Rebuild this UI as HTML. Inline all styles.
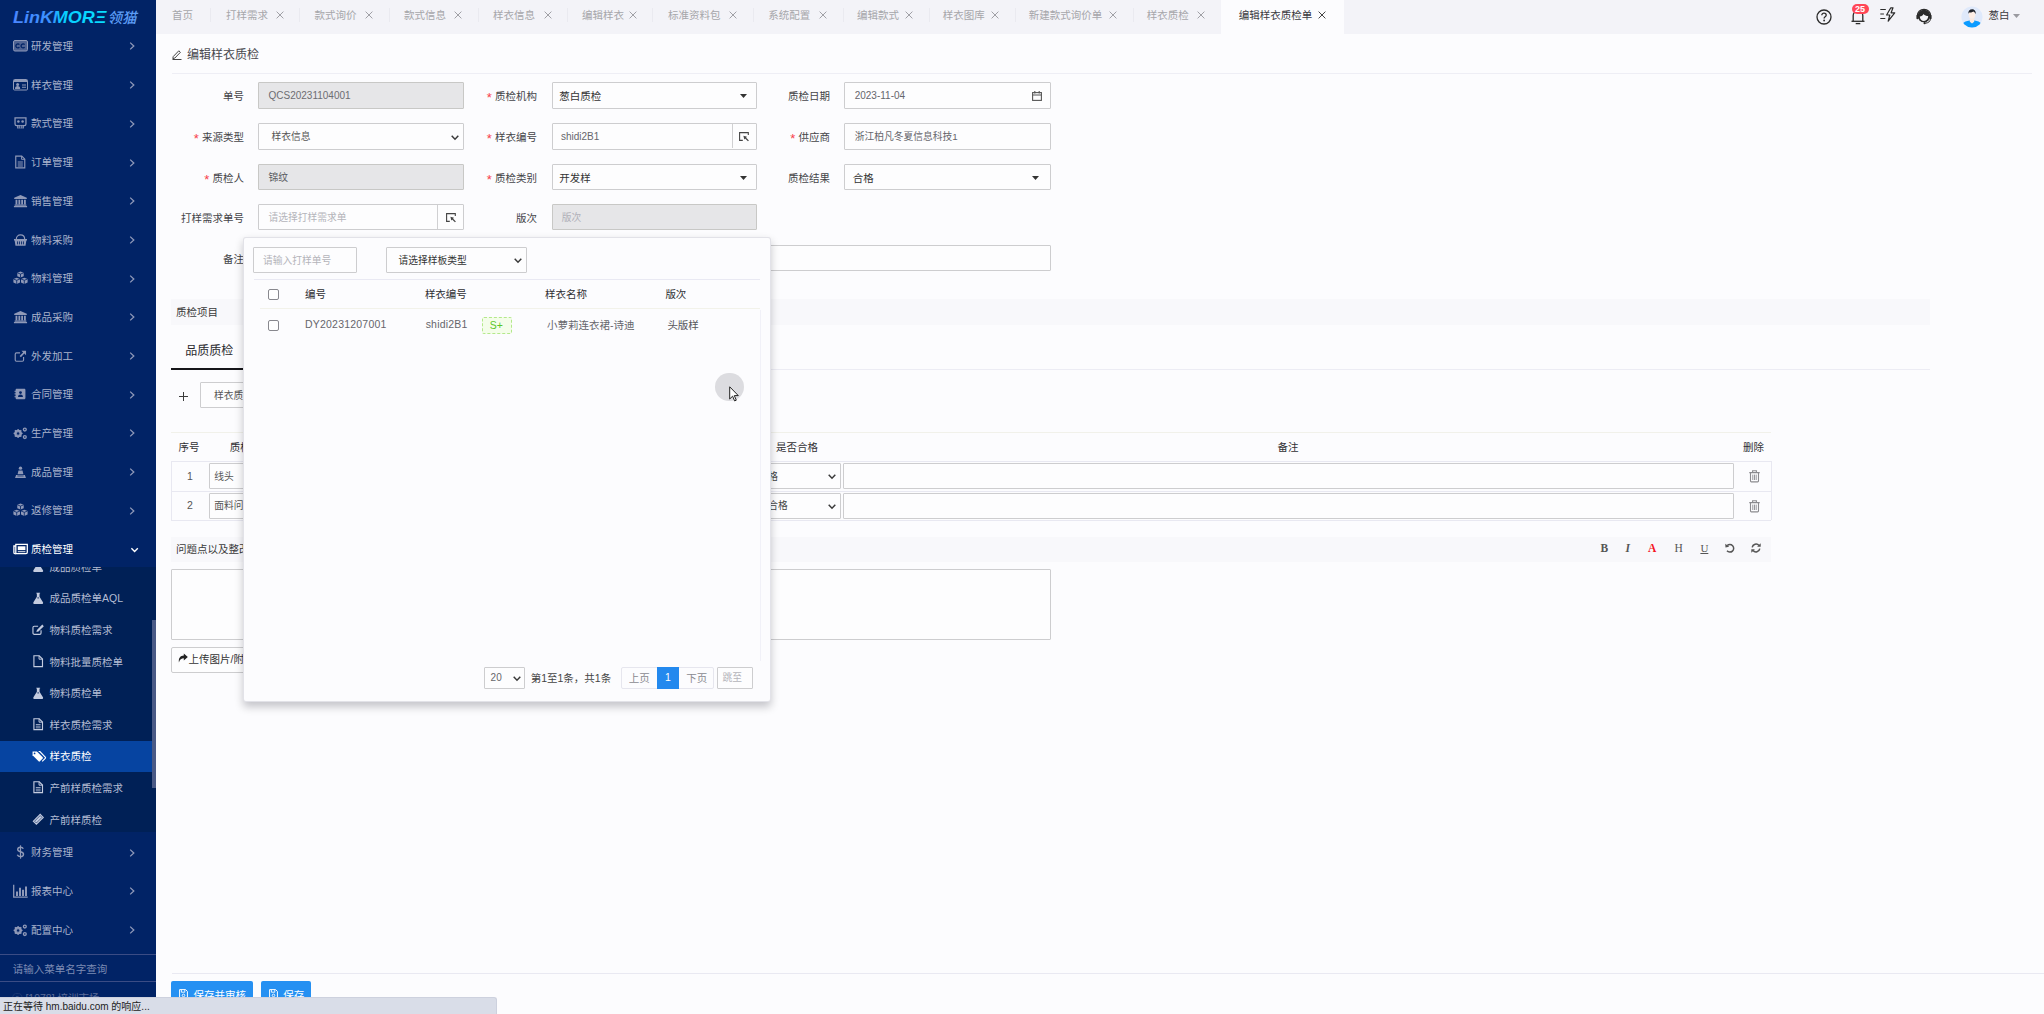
<!DOCTYPE html>
<html lang="zh-CN">
<head>
<meta charset="utf-8">
<title>编辑样衣质检单</title>
<style>
*{box-sizing:border-box;margin:0;padding:0}
html,body{width:2044px;height:1014px;overflow:hidden}
body{position:relative;background:#fcfcfe;font-family:"Liberation Sans","Noto Sans CJK SC",sans-serif;font-size:10.5px;color:#333}
.a{position:absolute}
.t{position:absolute;white-space:nowrap;line-height:14px;font-size:10.5px}
svg{position:absolute;overflow:visible}
/* sidebar */
#side{position:absolute;left:0;top:0;width:156px;height:1014px;background:#012366;overflow:hidden}
#side .m{position:absolute;left:0;width:156px;height:38.7px}
#side .m .t{left:31px;top:12.4px;color:#aab3cc}
#side .m svg.i{left:13px;top:12.4px;width:15px;height:14px}
#side .m svg.c{left:128px;top:14.9px;width:8px;height:10px}
#side .s{position:absolute;left:0;width:152px;height:31.6px}
#side .s .t{left:49.5px;top:8.8px;color:#b4bcd3}
#side .s svg.i{left:31.5px;top:9px;width:12.4px;height:12.4px}
/* tabs */
#tabs{position:absolute;left:156px;top:0;width:1888px;height:33.5px;background:#f3f3f8}
#tabs .t{top:7.7px;color:#a6a6aa}
#tabs svg.x{top:10.5px;width:8px;height:8px}
/* form */
.lab{position:absolute;white-space:nowrap;line-height:14px;font-size:10.5px;color:#444448;text-align:right}
.lab i{font-style:normal;color:#f8404a;margin-right:3.2px;font-size:13px;position:relative;top:2.2px;line-height:10px}
.inp{position:absolute;height:26px;border:1px solid #cdcdcf;background:#fdfdfe;border-radius:1px}
.inp.dis{background:#e6e6e8;border-color:#c8c8c6}
.inp .t{top:5.7px}
</style>
</head>
<body>
<div id="side">
<svg style="left:13px;top:9px;width:128px;height:17px" viewBox="0 0 128 17"><defs><linearGradient id="lg" gradientUnits="userSpaceOnUse" x1="0" x2="95" y1="0" y2="0"><stop offset="0" stop-color="#4b86ff"/><stop offset=".42" stop-color="#3a92ff"/><stop offset=".5" stop-color="#08ccff"/><stop offset="1" stop-color="#08e0ff"/></linearGradient></defs><text x="0" y="14.300" font-family="Liberation Sans,sans-serif" font-weight="bold" font-style="italic" font-size="17" textLength="93.500" lengthAdjust="spacingAndGlyphs" fill="url(#lg)">LinKMORΞ</text><text x="94.500" y="13.800" font-family="Noto Sans CJK SC,sans-serif" font-weight="500" font-style="italic" font-size="14.500" textLength="29" lengthAdjust="spacingAndGlyphs" fill="#5c9cf5">领猫</text></svg>
<div class="m" style="top:26.6px;color:#8f99b8"><svg class="i" viewBox="0 0 15 14"><rect x="0.5" y="1.5" width="14" height="10.5" rx="1.5" fill="currentColor" opacity=".55"/><rect x="0.5" y="1.5" width="14" height="10.5" rx="1.5" fill="none" stroke="currentColor"/><path d="M6.4 5.6a2 2 0 1 0 0 2.6M11.6 5.6a2 2 0 1 0 0 2.6" fill="none" stroke="#012366" stroke-width="1.3"/></svg><span class="t" style="color:#aab3cc">研发管理</span><svg class="c" viewBox="0 0 8 10"><path d="M2.200 1.600L5.800 5 2.200 8.400" fill="none" stroke="currentColor" stroke-width="1.300"/></svg></div>
<div class="m" style="top:65.3px;color:#8f99b8"><svg class="i" viewBox="0 0 15 14"><rect x="0.5" y="1.5" width="14" height="10.5" rx="1" fill="none" stroke="currentColor"/><rect x="1" y="2" width="13" height="2" fill="currentColor"/><circle cx="4.6" cy="6.6" r="1.5" fill="currentColor"/><path d="M2 11c0-2.2 1-3 2.6-3s2.6.8 2.6 3zM9 6.5h4v1H9zM9 8.7h4v1H9z" fill="currentColor"/></svg><span class="t" style="color:#aab3cc">样衣管理</span><svg class="c" viewBox="0 0 8 10"><path d="M2.200 1.600L5.800 5 2.200 8.400" fill="none" stroke="currentColor" stroke-width="1.300"/></svg></div>
<div class="m" style="top:104.1px;color:#8f99b8"><svg class="i" viewBox="0 0 15 14"><g transform="translate(1.20,1.12) scale(0.84)"><path d="M1 .8h13v7.400c0 1.100-.9 2-2 2H3c-1.100 0-2-.9-2-2z" fill="none" stroke="currentColor" stroke-width="1.500"/><circle cx="5" cy="5.200" r="1.500" fill="currentColor"/><circle cx="10" cy="5.200" r="1.500" fill="currentColor"/><path d="M3.500 10h8v3.500h-8z" fill="currentColor"/><path d="M5.500 10.300v3.200M7.500 10.300v3.200M9.500 10.300v3.200" stroke="#012366" stroke-width=".8"/></g></svg><span class="t" style="color:#aab3cc">款式管理</span><svg class="c" viewBox="0 0 8 10"><path d="M2.200 1.600L5.800 5 2.200 8.400" fill="none" stroke="currentColor" stroke-width="1.300"/></svg></div>
<div class="m" style="top:142.8px;color:#8f99b8"><svg class="i" viewBox="0 0 15 14"><g transform="translate(0.38,0.35) scale(0.95)"><path d="M2.5 .8h6.3l3.2 3.2v9.2H2.5z" fill="none" stroke="currentColor" stroke-width="1.2"/><path d="M8.6 .8v3.4h3.4" fill="none" stroke="currentColor"/><path d="M4.6 6.6h5.4v1H4.6zM4.6 8.7h5.4v1H4.6zM4.6 10.7h5.4v1H4.6z" fill="currentColor"/></g></svg><span class="t" style="color:#aab3cc">订单管理</span><svg class="c" viewBox="0 0 8 10"><path d="M2.200 1.600L5.800 5 2.200 8.400" fill="none" stroke="currentColor" stroke-width="1.300"/></svg></div>
<div class="m" style="top:181.5px;color:#8f99b8"><svg class="i" viewBox="0 0 15 14"><g transform="translate(0.75,0.70) scale(0.9)"><path d="M7.5 .3l7 3.2v1.3h-14V3.500zM2 5.600h2v5H2zM5.200 5.600h2v5h-2zM8.300 5.600h2v5h-2zM11.400 5.600h2v5h-2zM1 11h13v1.200H1zM.2 12.600h14.600V14H.2z" fill="currentColor"/></g></svg><span class="t" style="color:#aab3cc">销售管理</span><svg class="c" viewBox="0 0 8 10"><path d="M2.200 1.600L5.800 5 2.200 8.400" fill="none" stroke="currentColor" stroke-width="1.300"/></svg></div>
<div class="m" style="top:220.2px;color:#8f99b8"><svg class="i" viewBox="0 0 15 14"><g transform="translate(0.52,0.49) scale(0.93)"><path d="M.5 6h14v1.600h-.700l-.900 5.600H2.100L1.200 7.600H.5z" fill="currentColor"/><path d="M3 6.200C3 3.400 5 1.500 7.500 1.500S12 3.400 12 6.200" stroke="currentColor" stroke-width="1.300" fill="none"/><path d="M4.300 8.500v3.200M6.400 8.500v3.200M8.600 8.500v3.200M10.700 8.500v3.200" stroke="#012366" stroke-width=".9"/></g></svg><span class="t" style="color:#aab3cc">物料采购</span><svg class="c" viewBox="0 0 8 10"><path d="M2.200 1.600L5.800 5 2.200 8.400" fill="none" stroke="currentColor" stroke-width="1.300"/></svg></div>
<div class="m" style="top:258.9px;color:#8f99b8"><svg class="i" viewBox="0 0 15 14"><path d="M7.500 .5l3.200 1.300v3.400L7.500 6.600 4.300 5.200V1.800zM3.700 6.700l3.300 1.300v3.600l-3.300 1.500L.4 11.600V8zM11.300 6.700l3.300 1.300v3.600l-3.300 1.500L8 11.600V8z" fill="currentColor"/><path d="M4.300 1.800l3.200 1.300 3.200-1.300M7.500 3.100v3.400M.4 8l3.300 1.300L7 8M3.700 9.300v3.700M8 8l3.300 1.300L14.600 8M11.300 9.300v3.700" stroke="#012366" stroke-width=".8" fill="none"/></svg><span class="t" style="color:#aab3cc">物料管理</span><svg class="c" viewBox="0 0 8 10"><path d="M2.200 1.600L5.800 5 2.200 8.400" fill="none" stroke="currentColor" stroke-width="1.300"/></svg></div>
<div class="m" style="top:297.6px;color:#8f99b8"><svg class="i" viewBox="0 0 15 14"><g transform="translate(0.75,0.70) scale(0.9)"><path d="M7.5 .3l7 3.2v1.3h-14V3.500zM2 5.600h2v5H2zM5.200 5.600h2v5h-2zM8.300 5.600h2v5h-2zM11.400 5.600h2v5h-2zM1 11h13v1.200H1zM.2 12.600h14.600V14H.2z" fill="currentColor"/></g></svg><span class="t" style="color:#aab3cc">成品采购</span><svg class="c" viewBox="0 0 8 10"><path d="M2.200 1.600L5.800 5 2.200 8.400" fill="none" stroke="currentColor" stroke-width="1.300"/></svg></div>
<div class="m" style="top:336.2px;color:#8f99b8"><svg class="i" viewBox="0 0 15 14"><g transform="translate(0.90,0.84) scale(0.88)"><path d="M11 8v3.600c0 .8-.600 1.400-1.400 1.400H2.900c-.800 0-1.400-.600-1.400-1.400V4.900c0-.800.600-1.400 1.400-1.400H7" fill="none" stroke="currentColor" stroke-width="1.300"/><path d="M8.600 1h5.200v5.200l-1.900-1.900-4 4-1.400-1.400 4-4z" fill="currentColor"/></g></svg><span class="t" style="color:#aab3cc">外发加工</span><svg class="c" viewBox="0 0 8 10"><path d="M2.200 1.600L5.800 5 2.200 8.400" fill="none" stroke="currentColor" stroke-width="1.300"/></svg></div>
<div class="m" style="top:374.9px;color:#8f99b8"><svg class="i" viewBox="0 0 15 14"><g transform="translate(1.35,1.26) scale(0.82)"><path d="M3 .5h9c.800 0 1.500.700 1.500 1.500v10c0 .800-.700 1.500-1.500 1.500H3c-.800 0-1.500-.700-1.500-1.500V2C1.500 1.200 2.200.5 3 .5z" fill="currentColor"/><circle cx="7.500" cy="5.200" r="1.700" fill="#012366"/><path d="M4.500 10.600c0-2 1.200-3 3-3s3 1 3 3z" fill="#012366"/><path d="M.3 3h1.500v1.500H.3zM.3 6.200h1.500v1.500H.3zM.3 9.400h1.500v1.500H.3z" fill="currentColor"/></g></svg><span class="t" style="color:#aab3cc">合同管理</span><svg class="c" viewBox="0 0 8 10"><path d="M2.200 1.600L5.800 5 2.200 8.400" fill="none" stroke="currentColor" stroke-width="1.300"/></svg></div>
<div class="m" style="top:413.6px;color:#8f99b8"><svg class="i" viewBox="0 0 15 14"><g transform="translate(0.30,0.28) scale(0.96)"><circle cx="5" cy="7.500" r="3" fill="none" stroke="currentColor" stroke-width="2"/><path d="M5 2.800v9.400M.3 7.500h9.400M1.700 4.200l6.600 6.600M8.300 4.200l-6.600 6.600" stroke="currentColor" stroke-width="1.300"/><circle cx="5" cy="7.500" r="1.300" fill="#012366"/><circle cx="12" cy="3.400" r="1.500" fill="none" stroke="currentColor" stroke-width="1.400"/><circle cx="12" cy="11.200" r="1.500" fill="none" stroke="currentColor" stroke-width="1.400"/></g></svg><span class="t" style="color:#aab3cc">生产管理</span><svg class="c" viewBox="0 0 8 10"><path d="M2.200 1.600L5.800 5 2.200 8.400" fill="none" stroke="currentColor" stroke-width="1.300"/></svg></div>
<div class="m" style="top:452.4px;color:#8f99b8"><svg class="i" viewBox="0 0 15 14"><g transform="translate(0.90,0.84) scale(0.88)"><circle cx="7.500" cy="2.600" r="1.900" fill="currentColor"/><path d="M5.200 5.200h4.600l1 4.300H4.200zM2.500 10.400h10l1.200 3.300H1.300z" fill="currentColor"/><path d="M4 11.500h7" stroke="#012366" stroke-width=".8"/></g></svg><span class="t" style="color:#aab3cc">成品管理</span><svg class="c" viewBox="0 0 8 10"><path d="M2.200 1.600L5.800 5 2.200 8.400" fill="none" stroke="currentColor" stroke-width="1.300"/></svg></div>
<div class="m" style="top:491.1px;color:#8f99b8"><svg class="i" viewBox="0 0 15 14"><path d="M7.500 .5l3.200 1.300v3.400L7.500 6.600 4.300 5.200V1.800zM3.700 6.700l3.300 1.300v3.600l-3.300 1.500L.4 11.600V8zM11.300 6.700l3.300 1.300v3.600l-3.300 1.500L8 11.600V8z" fill="currentColor"/><path d="M4.300 1.800l3.200 1.300 3.200-1.300M7.500 3.100v3.400M.4 8l3.300 1.300L7 8M3.700 9.300v3.700M8 8l3.300 1.300L14.600 8M11.300 9.300v3.700" stroke="#012366" stroke-width=".8" fill="none"/></svg><span class="t" style="color:#aab3cc">返修管理</span><svg class="c" viewBox="0 0 8 10"><path d="M2.200 1.600L5.800 5 2.200 8.400" fill="none" stroke="currentColor" stroke-width="1.300"/></svg></div>
<div class="m" style="top:529.8px;color:#ffffff"><svg class="i" viewBox="0 0 15 14"><path d="M2.800 2.300h11.500v8c0 .700-.600 1.300-1.300 1.300H2.800z" fill="none" stroke="currentColor" stroke-width="1.300"/><path d="M2.800 4H.900v6.400c0 .700.500 1.200 1.200 1.200h.700" fill="none" stroke="currentColor" stroke-width="1.300"/><rect x="4.800" y="4.300" width="7.600" height="3.800" fill="currentColor"/><path d="M4.800 9.700h7.600" stroke="currentColor" stroke-width=".9"/></svg><span class="t" style="color:#ffffff">质检管理</span><svg class="c" viewBox="0 0 8 10" style="left:129px;width:10px"><path d="M1.400 3.200L4.600 6.400 7.800 3.200" fill="none" stroke="currentColor" stroke-width="1.400"/></svg></div>
<div class="a" style="left:0;top:567px;width:156px;height:265px;background:#002056;overflow:hidden">
<div class="s" style="top:-15.9px;color:#c3cbdf"><svg class="i" viewBox="0 0 13 13"><path d="M4.500 .8h4v.900h-.600v3.400l3.600 5.700c.500.900-.100 1.900-1.100 1.900H2.600c-1 0-1.600-1-1.100-1.900l3.600-5.700V1.700h-.600z" fill="currentColor"/><path d="M5.600 6.200h1.800" stroke="#002056" stroke-width=".9"/></svg><span class="t">成品质检单</span></div>
<div class="s" style="top:15.7px;color:#c3cbdf"><svg class="i" viewBox="0 0 13 13"><path d="M4.500 .8h4v.900h-.600v3.400l3.600 5.700c.500.900-.100 1.900-1.100 1.900H2.600c-1 0-1.600-1-1.100-1.900l3.600-5.700V1.700h-.600z" fill="currentColor"/><path d="M5.600 6.200h1.800" stroke="#002056" stroke-width=".9"/></svg><span class="t">成品质检单AQL</span></div>
<div class="s" style="top:47.3px;color:#c3cbdf"><svg class="i" viewBox="0 0 13 13"><path d="M9.500 7.500v3c0 .800-.600 1.400-1.400 1.400H2.400C1.600 11.900 1 11.300 1 10.500V4.800c0-.800.600-1.400 1.400-1.400h4" fill="none" stroke="currentColor" stroke-width="1.200"/><path d="M5.200 7.300L10.800 1.700l1.600 1.600L6.800 8.900l-2.200.600z" fill="currentColor"/></svg><span class="t">物料质检需求</span></div>
<div class="s" style="top:78.9px;color:#c3cbdf"><svg class="i" viewBox="0 0 13 13"><path d="M2 .8h5.600l3.400 3.400v8H2z" fill="none" stroke="currentColor" stroke-width="1.200"/><path d="M7.400.8v3.600h3.600" fill="none" stroke="currentColor" stroke-width="1"/></svg><span class="t">物料批量质检单</span></div>
<div class="s" style="top:110.5px;color:#c3cbdf"><svg class="i" viewBox="0 0 13 13"><path d="M4.500 .8h4v.900h-.600v3.400l3.600 5.700c.500.900-.100 1.900-1.100 1.900H2.600c-1 0-1.600-1-1.100-1.900l3.600-5.700V1.700h-.600z" fill="currentColor"/><path d="M5.600 6.200h1.800" stroke="#002056" stroke-width=".9"/></svg><span class="t">物料质检单</span></div>
<div class="s" style="top:142.1px;color:#c3cbdf"><svg class="i" viewBox="0 0 13 13"><path d="M2 .8h5.600l3.400 3.400v8H2z" fill="none" stroke="currentColor" stroke-width="1.200"/><path d="M7.400.8v3.600h3.600" fill="none" stroke="currentColor" stroke-width="1"/><path d="M4 6.300h5v.9H4zM4 8.100h5v.9H4zM4 9.900h5v.9H4z" fill="currentColor"/></svg><span class="t">样衣质检需求</span></div>
<div class="s" style="top:173.7px;background:#0644a1;color:#fff"><svg class="i" viewBox="0 0 13 13"><path d="M.6 1.600h4.600l6 6c.4.400.4 1 0 1.400l-2.900 2.900c-.400.400-1 .400-1.400 0l-6.300-6.300z" fill="currentColor"/><circle cx="2.700" cy="3.600" r=".9" fill="#0644a1"/><path d="M7 1.600h1.300l5.600 5.800c.4.400.4 1 0 1.400l-3.200 3.200" fill="none" stroke="currentColor" stroke-width="1.200"/></svg><span class="t" style="color:#fff">样衣质检</span></div>
<div class="s" style="top:205.3px;color:#c3cbdf"><svg class="i" viewBox="0 0 13 13"><path d="M2 .8h5.600l3.400 3.400v8H2z" fill="none" stroke="currentColor" stroke-width="1.200"/><path d="M7.400.8v3.600h3.600" fill="none" stroke="currentColor" stroke-width="1"/><path d="M4 6.300h5v.9H4zM4 8.100h5v.9H4zM4 9.900h5v.9H4z" fill="currentColor"/></svg><span class="t">产前样质检需求</span></div>
<div class="s" style="top:236.9px;color:#c3cbdf"><svg class="i" viewBox="0 0 13 13"><path d="M8.600 .6l4 4-8 8-4-4z" fill="currentColor"/><path d="M8.600 2.700l1.900 1.900-5.900 5.900-1.900-1.900z" fill="none" stroke="#002056" stroke-width=".6"/></svg><span class="t">产前样质检</span></div>
<div class="a" style="left:151.5px;top:53px;width:4.5px;height:168px;background:#4a5a86"></div>
</div>
<div class="m" style="top:832.9px;color:#8f99b8"><svg class="i" viewBox="0 0 15 14"><path d="M10.300 3.800C9.800 2.800 8.800 2.300 7.500 2.300c-1.700 0-2.800.900-2.800 2.200 0 3 5.800 1.500 5.800 4.700 0 1.400-1.200 2.400-3 2.400-1.500 0-2.700-.700-3.200-1.900" fill="none" stroke="currentColor" stroke-width="1.400"/><path d="M7.500 .3v13.400" stroke="currentColor" stroke-width="1.200"/></svg><span class="t">财务管理</span><svg class="c" viewBox="0 0 8 10"><path d="M2.200 1.600L5.800 5 2.200 8.400" fill="none" stroke="currentColor" stroke-width="1.300"/></svg></div>
<div class="m" style="top:871.6px;color:#8f99b8"><svg class="i" viewBox="0 0 15 14"><path d="M.700 .800v12.400h14" fill="none" stroke="currentColor" stroke-width="1.300"/><path d="M3 7.500h2v4.600H3zM6 3.800h2v8.300H6zM9 5.800h2v6.300H9zM12 2.500h2v9.600h-2z" fill="currentColor"/></svg><span class="t">报表中心</span><svg class="c" viewBox="0 0 8 10"><path d="M2.200 1.600L5.800 5 2.200 8.400" fill="none" stroke="currentColor" stroke-width="1.300"/></svg></div>
<div class="m" style="top:910.2px;color:#8f99b8"><svg class="i" viewBox="0 0 15 14"><g transform="translate(0.30,0.28) scale(0.96)"><circle cx="5" cy="7.500" r="3" fill="none" stroke="currentColor" stroke-width="2"/><path d="M5 2.800v9.400M.3 7.500h9.400M1.700 4.200l6.600 6.600M8.300 4.200l-6.600 6.600" stroke="currentColor" stroke-width="1.300"/><circle cx="5" cy="7.500" r="1.300" fill="#012366"/><circle cx="12" cy="3.400" r="1.500" fill="none" stroke="currentColor" stroke-width="1.400"/><circle cx="12" cy="11.200" r="1.500" fill="none" stroke="currentColor" stroke-width="1.400"/></g></svg><span class="t">配置中心</span><svg class="c" viewBox="0 0 8 10"><path d="M2.200 1.600L5.800 5 2.200 8.400" fill="none" stroke="currentColor" stroke-width="1.300"/></svg></div>
<div class="a" style="left:0;top:953.5px;width:156px;height:1px;background:#3b4c85"></div>
<span class="t" style="left:12.700px;top:962.400px;color:#7d8cb4">请输入菜单名字查询</span>
<div class="a" style="left:0;top:981.3px;width:156px;height:1px;background:#3b4c85"></div>
<span class="t" style="left:12px;top:990.500px;color:#5d6c98">ⓒ [1978] 培训市场</span>
</div>
<div id="tabs">
<div class="a" style="left:1065px;top:0;width:123px;height:33.5px;background:#fcfcfe"></div>
<div class="a" style="left:53.7px;top:8px;width:1px;height:14px;background:#eaeaf0"></div>
<div class="a" style="left:143.4px;top:8px;width:1px;height:14px;background:#eaeaf0"></div>
<div class="a" style="left:232.5px;top:8px;width:1px;height:14px;background:#eaeaf0"></div>
<div class="a" style="left:321.5px;top:8px;width:1px;height:14px;background:#eaeaf0"></div>
<div class="a" style="left:411.0px;top:8px;width:1px;height:14px;background:#eaeaf0"></div>
<div class="a" style="left:496.0px;top:8px;width:1px;height:14px;background:#eaeaf0"></div>
<div class="a" style="left:596.5px;top:8px;width:1px;height:14px;background:#eaeaf0"></div>
<div class="a" style="left:686.5px;top:8px;width:1px;height:14px;background:#eaeaf0"></div>
<div class="a" style="left:772.5px;top:8px;width:1px;height:14px;background:#eaeaf0"></div>
<div class="a" style="left:858.5px;top:8px;width:1px;height:14px;background:#eaeaf0"></div>
<div class="a" style="left:976.5px;top:8px;width:1px;height:14px;background:#eaeaf0"></div>
<span class="t" style="left:16.0px">首页</span>
<span class="t" style="left:70.0px">打样需求</span>
<svg class="x" viewBox="0 0 8 8" style="left:120.2px"><path d="M.6.6l6.800 6.800M7.400.6L.6 7.400" stroke="#a0a0a6" stroke-width="1" fill="none"/></svg>
<span class="t" style="left:158.5px">款式询价</span>
<svg class="x" viewBox="0 0 8 8" style="left:209.0px"><path d="M.6.6l6.800 6.800M7.400.6L.6 7.400" stroke="#a0a0a6" stroke-width="1" fill="none"/></svg>
<span class="t" style="left:248.0px">款式信息</span>
<svg class="x" viewBox="0 0 8 8" style="left:298.0px"><path d="M.6.6l6.800 6.800M7.400.6L.6 7.400" stroke="#a0a0a6" stroke-width="1" fill="none"/></svg>
<span class="t" style="left:337.0px">样衣信息</span>
<svg class="x" viewBox="0 0 8 8" style="left:387.5px"><path d="M.6.6l6.800 6.800M7.400.6L.6 7.400" stroke="#a0a0a6" stroke-width="1" fill="none"/></svg>
<span class="t" style="left:426.0px">编辑样衣</span>
<svg class="x" viewBox="0 0 8 8" style="left:472.5px"><path d="M.6.6l6.800 6.800M7.400.6L.6 7.400" stroke="#a0a0a6" stroke-width="1" fill="none"/></svg>
<span class="t" style="left:512.0px">标准资料包</span>
<svg class="x" viewBox="0 0 8 8" style="left:573.0px"><path d="M.6.6l6.800 6.800M7.400.6L.6 7.400" stroke="#a0a0a6" stroke-width="1" fill="none"/></svg>
<span class="t" style="left:612.2px">系统配置</span>
<svg class="x" viewBox="0 0 8 8" style="left:663.0px"><path d="M.6.6l6.800 6.800M7.400.6L.6 7.400" stroke="#a0a0a6" stroke-width="1" fill="none"/></svg>
<span class="t" style="left:701.0px">编辑款式</span>
<svg class="x" viewBox="0 0 8 8" style="left:748.7px"><path d="M.6.6l6.800 6.800M7.400.6L.6 7.400" stroke="#a0a0a6" stroke-width="1" fill="none"/></svg>
<span class="t" style="left:786.8px">样衣图库</span>
<svg class="x" viewBox="0 0 8 8" style="left:834.7px"><path d="M.6.6l6.800 6.800M7.400.6L.6 7.400" stroke="#a0a0a6" stroke-width="1" fill="none"/></svg>
<span class="t" style="left:872.8px">新建款式询价单</span>
<svg class="x" viewBox="0 0 8 8" style="left:952.6px"><path d="M.6.6l6.800 6.800M7.400.6L.6 7.400" stroke="#a0a0a6" stroke-width="1" fill="none"/></svg>
<span class="t" style="left:990.8px">样衣质检</span>
<svg class="x" viewBox="0 0 8 8" style="left:1040.7px"><path d="M.6.6l6.800 6.800M7.400.6L.6 7.400" stroke="#a0a0a6" stroke-width="1" fill="none"/></svg>
<span class="t" style="left:1082.7px;color:#3a3a40">编辑样衣质检单</span>
<svg class="x" viewBox="0 0 8 8" style="left:1162.0px"><path d="M.6.6l6.800 6.800M7.400.6L.6 7.400" stroke="#444" stroke-width="1" fill="none"/></svg>
<svg style="left:1660px;top:8.700px;width:16px;height:16px" viewBox="0 0 16 16"><circle cx="8" cy="8" r="7" fill="none" stroke="#2b2b2b" stroke-width="1.300"/><path d="M5.800 6.300c0-1.300 1-2.100 2.200-2.100s2.200.800 2.200 2c0 1.500-2.100 1.600-2.100 3.200" fill="none" stroke="#2b2b2b" stroke-width="1.300"/><circle cx="8.100" cy="11.500" r=".9" fill="#2b2b2b"/></svg>
<svg style="left:1695px;top:10px;width:14px;height:15px" viewBox="0 0 14 15"><path d="M2.200 11V5.500C2.200 2.800 4.300 1 7 1s4.800 1.800 4.800 4.500V11" fill="none" stroke="#2b2b2b" stroke-width="1.300"/><path d="M.5 11.300h13" stroke="#2b2b2b" stroke-width="1.300"/><path d="M4.700 13.600h4.600" stroke="#2b2b2b" stroke-width="1.300"/></svg>
<div class="a" style="left:1696px;top:4px;width:16.500px;height:9.500px;border-radius:5px;background:#ff4757"></div>
<span class="t" style="left:1699px;top:1.800px;font-size:9px;color:#fff;font-weight:bold">25</span>
<svg style="left:1724px;top:7px;width:16px;height:15px" viewBox="0 0 16 15"><path d="M.3 2.500h5.500M.3 7h3.600M.3 11.500h5" stroke="#2b2b2b" stroke-width="1.200"/><path d="M10.800 .8L6.600 8h3.200l-1.600 6.200 6.500-8.400h-3.600l1.900-5z" fill="none" stroke="#2b2b2b" stroke-width="1.200" stroke-linejoin="round"/></svg>
<svg style="left:1760px;top:8px;width:16px;height:17px" viewBox="0 0 16 17"><circle cx="8" cy="8" r="6.300" fill="#2b2b2b"/><path d="M3.800 8.500c1.800-.3 3-1.200 3.800-2.600 1 1.300 2.700 2.100 4.600 2.200 0 2.900-1.800 4.900-4.200 4.900s-4.200-1.900-4.200-4.500z" fill="#f4f4f7"/><path d="M1.300 8c0-4 3-6.700 6.700-6.700S14.700 4 14.700 8" fill="none" stroke="#2b2b2b" stroke-width="1.300"/><rect x=".4" y="7" width="2.200" height="4.200" rx="1" fill="#2b2b2b"/><rect x="13.400" y="7" width="2.200" height="4.200" rx="1" fill="#2b2b2b"/><path d="M14.300 11c0 2.500-2 4-5 4.200" fill="none" stroke="#2b2b2b" stroke-width="1"/><circle cx="8.600" cy="15.200" r="1.100" fill="#2b2b2b"/></svg>
<svg style="left:1805px;top:5.500px;width:22px;height:22px" viewBox="0 0 22 22"><defs><clipPath id="av"><circle cx="11" cy="11" r="10.600"/></clipPath></defs><circle cx="11" cy="11" r="10.600" fill="#dfe9fb"/><g clip-path="url(#av)"><path d="M0 22c0-5 4-7.500 11-7.500S22 17 22 22z" fill="#0c9bff"/><path d="M8.800 12.500h4.400v3.200l-2.200 1.800-2.200-1.800z" fill="#fbe9e0"/><ellipse cx="11" cy="8.800" rx="3.300" ry="4" fill="#fdeee6"/><path d="M7.300 8.200C7 4.800 8.700 3.200 11 3.200s4.100 1.500 3.700 5c-.6-1.600-1.300-2.400-2.200-2.800-1.500.9-3.200 1.200-4.500 1.200-.3.500-.5 1-.7 1.600z" fill="#22262e"/></g></svg>
<span class="t" style="left:1832.600px;top:8.200px;color:#3a3a40">葱白</span>
<svg style="left:1856.500px;top:13.500px;width:7px;height:4px" viewBox="0 0 7 4"><path d="M0 0h7L3.500 4z" fill="#9a9aa0"/></svg>
</div>
<svg style="left:172px;top:48.500px;width:10px;height:11px" viewBox="0 0 10 11"><path d="M1.200 7.600L6.800 1.800l1.600 1.500-5.600 5.800-2 .5z" fill="none" stroke="#444" stroke-width="1"/><path d="M.5 10.500h9" stroke="#444" stroke-width="1"/></svg>
<span class="t" style="left:187.0px;top:48.0px;font-size:12px;color:#48484e;">编辑样衣质检</span>
<div class="a" style="left:172px;top:73px;width:1860px;height:1px;background:#eeeef5"></div>
<span class="lab" style="right:1800.0px;top:89.0px">单号</span>
<div class="inp dis" style="left:258px;top:82px;height:27px;width:206px"><span class="t" style="left:9.5px;top:5.9px;font-size:10px;color:#6d6d72;">QCS20231104001</span></div>
<span class="lab" style="right:1800.0px;top:129.8px"><i>*</i>来源类型</span>
<div class="inp" style="left:258px;top:123px;height:27px;width:206px"><span class="t" style="left:12.5px;top:5.7px;font-size:9.75px;color:#555;">样衣信息</span><svg style="left:192.0px;top:10.5px;width:8px;height:5.500px" viewBox="0 0 8 5.500"><path d="M.7.800L4 4.200 7.300.800" fill="none" stroke="#3a3a3a" stroke-width="1.500"/></svg></div>
<span class="lab" style="right:1800.0px;top:170.6px"><i>*</i>质检人</span>
<div class="inp dis" style="left:258px;top:164px;height:26px;width:206px"><span class="t" style="left:9.5px;top:5.7px;font-size:9.75px;color:#5a5a60;">锦纹</span></div>
<span class="lab" style="right:1800.0px;top:210.8px">打样需求单号</span>
<div class="inp" style="left:258px;top:204px;height:26px;width:206px"><span class="t" style="left:9.5px;top:5.7px;font-size:9.75px;color:#b4b4ba;">请选择打样需求单</span><div class="a" style="left:178.300px;top:0;width:1px;height:24.400px;background:#d0d0d2"></div><svg style="left:186.6px;top:8.0px;width:10px;height:9px" viewBox="0 0 10 9"><path d="M9.300 3V.6H.6v7.800h3.200" fill="none" stroke="#444" stroke-width="1.100"/><path d="M4.400 3.800l3.600.9-2.700 2.700z" fill="#444"/><path d="M5.800 5.300l3.600 3.600" stroke="#444" stroke-width="1.300"/></svg></div>
<span class="lab" style="right:1507.0px;top:89.0px"><i>*</i>质检机构</span>
<div class="inp" style="left:552.200px;top:82px;height:27px;width:204.500px"><span class="t" style="left:6.0px;top:5.7px;font-size:10.5px;color:#333;">葱白质检</span><svg style="left:186.7px;top:11.0px;width:7px;height:4px" viewBox="0 0 7 4"><path d="M0 0h7L3.500 4z" fill="#333"/></svg></div>
<span class="lab" style="right:1507.0px;top:129.8px"><i>*</i>样衣编号</span>
<div class="inp" style="left:552.200px;top:123px;height:27px;width:204.500px"><span class="t" style="left:7.8px;top:5.9px;font-size:10px;color:#66666c;">shidi2B1</span><div class="a" style="left:178.500px;top:0;width:1px;height:24.400px;background:#d0d0d2"></div><svg style="left:185.5px;top:8.0px;width:10px;height:9px" viewBox="0 0 10 9"><path d="M9.300 3V.6H.6v7.800h3.200" fill="none" stroke="#444" stroke-width="1.100"/><path d="M4.400 3.800l3.600.9-2.700 2.700z" fill="#444"/><path d="M5.800 5.300l3.600 3.600" stroke="#444" stroke-width="1.300"/></svg></div>
<span class="lab" style="right:1507.0px;top:170.6px"><i>*</i>质检类别</span>
<div class="inp" style="left:552.200px;top:164px;height:26px;width:204.500px"><span class="t" style="left:6.0px;top:5.7px;font-size:10.5px;color:#333;">开发样</span><svg style="left:186.7px;top:11.0px;width:7px;height:4px" viewBox="0 0 7 4"><path d="M0 0h7L3.500 4z" fill="#333"/></svg></div>
<span class="lab" style="right:1507.0px;top:210.8px">版次</span>
<div class="inp dis" style="left:552.200px;top:204px;height:26px;width:204.500px"><span class="t" style="left:8.5px;top:5.7px;font-size:9.75px;color:#b0b0b8;">版次</span></div>
<span class="lab" style="right:1214.0px;top:89.0px">质检日期</span>
<div class="inp" style="left:844.200px;top:82px;height:27px;width:206.600px"><span class="t" style="left:9.5px;top:5.9px;font-size:10px;color:#66666c;">2023-11-04</span><svg style="left:187px;top:7.500px;width:10px;height:10px" viewBox="0 0 10 10"><rect x=".6" y="1.600" width="8.800" height="7.800" fill="none" stroke="#555" stroke-width="1.100"/><path d="M.6 4h8.800M2.800 0v2.400M7.200 0v2.400" stroke="#555" stroke-width="1.100"/></svg></div>
<span class="lab" style="right:1214.0px;top:129.8px"><i>*</i>供应商</span>
<div class="inp" style="left:844.200px;top:123px;height:27px;width:206.600px"><span class="t" style="left:9.5px;top:5.7px;font-size:9.75px;color:#66666c;">浙江柏凡冬夏信息科技1</span></div>
<span class="lab" style="right:1214.0px;top:170.6px">质检结果</span>
<div class="inp" style="left:844.200px;top:164px;height:26px;width:206.600px"><span class="t" style="left:7.5px;top:5.7px;font-size:10.5px;color:#333;">合格</span><svg style="left:187.0px;top:11.0px;width:7px;height:4px" viewBox="0 0 7 4"><path d="M0 0h7L3.500 4z" fill="#333"/></svg></div>
<span class="lab" style="right:1800.0px;top:251.8px">备注</span>
<div class="inp" style="left:258px;top:244.800px;width:792.800px;height:26.400px"></div>
<div class="a" style="left:171px;top:299px;width:1758.500px;height:26.300px;background:#f8f8fb"></div>
<span class="t" style="left:176.0px;top:305.2px;font-size:10.5px;color:#3a3a3a;">质检项目</span>
<span class="t" style="left:185.2px;top:343.5px;font-size:12px;color:#2a2a2e;">品质质检</span>
<div class="a" style="left:171px;top:368.800px;width:1758.500px;height:1px;background:#ececf4"></div>
<div class="a" style="left:171px;top:367.500px;width:77px;height:2.400px;background:#16161a"></div>
<svg style="left:179.300px;top:392px;width:9px;height:9px" viewBox="0 0 9 9"><path d="M4.500 0v9M0 4.500h9" stroke="#3c3c3c" stroke-width="1"/></svg>
<div class="inp" style="left:200.400px;top:382.200px;width:150px"><span class="t" style="left:12.5px;top:5.7px;font-size:9.75px;color:#555;">样衣质检</span></div>
<div class="a" style="left:171px;top:432px;width:1600px;height:1px;background:#f1f1ea"></div>
<span class="t" style="left:178.5px;top:440.2px;font-size:10.5px;color:#303034;">序号</span>
<span class="t" style="left:229.7px;top:440.2px;font-size:10.5px;color:#303034;">质检项目</span>
<span class="t" style="left:776.0px;top:440.2px;font-size:10.5px;color:#303034;">是否合格</span>
<span class="t" style="left:1277.5px;top:440.2px;font-size:10.5px;color:#303034;">备注</span>
<span class="t" style="left:1743.0px;top:440.2px;font-size:10.5px;color:#303034;">删除</span>
<div class="a" style="left:171px;top:461px;width:1600px;height:1px;background:#e8e8f1"></div>
<div class="a" style="left:171px;top:490.5px;width:1600px;height:1px;background:#e8e8f1"></div>
<div class="a" style="left:171px;top:519.5px;width:1600px;height:1px;background:#e8e8f1"></div>
<div class="a" style="left:171px;top:461px;width:1px;height:59px;background:#e8e8f1"></div>
<div class="a" style="left:1771px;top:461px;width:1px;height:59px;background:#e8e8f1"></div>
<span class="t" style="left:187.0px;top:468.6px;font-size:10.5px;color:#555;">1</span>
<div class="inp" style="left:208.700px;top:463px;width:545px;height:26px"><span class="t" style="left:4.5px;top:5.5px;font-size:9.75px;color:#555;">线头</span></div>
<div class="inp" style="left:755px;top:463px;width:86px;height:26px"><span class="t" style="left:2.5px;top:5.5px;font-size:9.75px;color:#444;">合格</span><svg style="left:72.0px;top:10.0px;width:8px;height:5.500px" viewBox="0 0 8 5.500"><path d="M.7.800L4 4.200 7.300.800" fill="none" stroke="#3a3a3a" stroke-width="1.500"/></svg></div>
<div class="inp" style="left:843.300px;top:463px;width:891.200px;height:26px"></div>
<svg style="left:1748.500px;top:470.2px;width:11px;height:12.500px" viewBox="0 0 11 12.500"><path d="M.3 2.600h10.400M3.600 2.400V.8h3.800v1.600" fill="none" stroke="#8a8a8e" stroke-width="1.100"/><path d="M1.500 2.800v8.200c0 .5.400.9.900.9h6.200c.5 0 .9-.4.900-.9V2.800" fill="none" stroke="#8a8a8e" stroke-width="1.100"/><path d="M3.800 4.600v5.400M5.500 4.600v5.400M7.200 4.600v5.400" stroke="#8a8a8e" stroke-width=".9"/></svg>
<span class="t" style="left:187.0px;top:498.4px;font-size:10.5px;color:#555;">2</span>
<div class="inp" style="left:208.700px;top:492.8px;width:545px;height:26px"><span class="t" style="left:4.5px;top:5.5px;font-size:9.75px;color:#555;">面料问题</span></div>
<div class="inp" style="left:755px;top:492.8px;width:86px;height:26px"><span class="t" style="left:2.5px;top:5.5px;font-size:9.75px;color:#444;">不合格</span><svg style="left:72.0px;top:10.0px;width:8px;height:5.500px" viewBox="0 0 8 5.500"><path d="M.7.800L4 4.200 7.300.800" fill="none" stroke="#3a3a3a" stroke-width="1.500"/></svg></div>
<div class="inp" style="left:843.300px;top:492.8px;width:891.200px;height:26px"></div>
<svg style="left:1748.500px;top:499.5px;width:11px;height:12.500px" viewBox="0 0 11 12.500"><path d="M.3 2.600h10.400M3.600 2.400V.8h3.800v1.600" fill="none" stroke="#8a8a8e" stroke-width="1.100"/><path d="M1.500 2.800v8.200c0 .5.400.9.900.9h6.200c.5 0 .9-.4.900-.9V2.800" fill="none" stroke="#8a8a8e" stroke-width="1.100"/><path d="M3.800 4.600v5.400M5.500 4.600v5.400M7.200 4.600v5.400" stroke="#8a8a8e" stroke-width=".9"/></svg>
<div class="a" style="left:171px;top:536.500px;width:1600px;height:25.300px;background:#f8f8fb"></div>
<span class="t" style="left:176.0px;top:541.7px;font-size:10.5px;color:#3a3a3a;">问题点以及整改意见</span>
<span class="t" style="left:1600.5px;top:540.5px;font-size:11.5px;color:#555;font-family:'Liberation Serif',serif;font-weight:bold">B</span>
<span class="t" style="left:1625.5px;top:540.5px;font-size:11.5px;color:#555;font-family:'Liberation Serif',serif;font-style:italic;font-weight:bold">I</span>
<span class="t" style="left:1648.0px;top:540.5px;font-size:11.5px;color:#f5141e;font-family:'Liberation Serif',serif;font-weight:bold">A</span>
<span class="t" style="left:1674.4px;top:540.5px;font-size:11.5px;color:#555;font-family:'Liberation Serif',serif;">H</span>
<span class="t" style="left:1700.4px;top:540.5px;font-size:11px;color:#555;font-family:'Liberation Serif',serif;text-decoration:underline">U</span>
<svg style="left:1724.800px;top:543px;width:10px;height:10px" viewBox="0 0 10 10"><path d="M2.200 2.600A3.800 3.800 0 1 1 2 7.800" fill="none" stroke="#555" stroke-width="1.500"/><path d="M.2.800l.3 3.800 3.700-.8z" fill="#555"/></svg>
<svg style="left:1751px;top:543px;width:10px;height:10px" viewBox="0 0 10 10"><path d="M1.200 4.300A3.900 3.900 0 0 1 8 2.400M8.800 5.700A3.900 3.900 0 0 1 2 7.600" fill="none" stroke="#555" stroke-width="1.500"/><path d="M9.700.2v3.600H6.100zM.3 9.800V6.200h3.600z" fill="#555"/></svg>
<div class="inp" style="left:171px;top:569.200px;width:879.800px;height:70.500px"></div>
<div class="inp" style="left:171px;top:647.400px;width:110px;height:25.300px;border-radius:2px"><svg style="left:5.500px;top:5px;width:10px;height:10px" viewBox="0 0 10 10"><path d="M5.800.6L9.800 4 5.800 7.400V5.300C3.400 5.300 1.800 6.300.9 9.400.3 5.300 2.400 2.700 5.800 2.600z" fill="#222"/></svg><span class="t" style="left:16.5px;top:3.4px;font-size:10.5px;color:#333;">上传图片/附件</span></div>
<div class="a" style="left:172px;top:973px;width:1872px;height:1px;background:#e9e9f2"></div>
<div class="a" style="left:171px;top:981px;width:81.700px;height:27px;background:#2590f2;border-radius:2px"><svg style="left:8px;top:7.500px;width:9px;height:10px" viewBox="0 0 9 10"><path d="M.6.600h6l1.800 1.800v7H.6z" fill="none" stroke="#fff" stroke-width="1"/><path d="M2.400.8v2.400h3.400V.8" fill="none" stroke="#fff" stroke-width=".9"/><circle cx="4.500" cy="6.400" r="1.300" fill="none" stroke="#fff" stroke-width=".9"/></svg><span class="t" style="left:22.4px;top:7.0px;font-size:10.5px;color:#fff;">保存并审核</span></div>
<div class="a" style="left:260.800px;top:981px;width:50.200px;height:27px;background:#2590f2;border-radius:2px"><svg style="left:8px;top:7.500px;width:9px;height:10px" viewBox="0 0 9 10"><path d="M.6.600h6l1.800 1.800v7H.6z" fill="none" stroke="#fff" stroke-width="1"/><path d="M2.400.8v2.400h3.400V.8" fill="none" stroke="#fff" stroke-width=".9"/><circle cx="4.500" cy="6.400" r="1.300" fill="none" stroke="#fff" stroke-width=".9"/></svg><span class="t" style="left:22.4px;top:7.0px;font-size:10.5px;color:#fff;">保存</span></div>
<div class="a" id="pop" style="left:243.200px;top:237.200px;width:527.600px;height:465px;background:#fcfcfe;border:1px solid rgba(0,0,40,.10);border-radius:3px;box-shadow:0 4.500px 9px rgba(0,0,20,.22)">
<div class="inp" style="left:9.0px;top:9.0px;width:104px;height:26px"><span class="t" style="left:8.8px;top:5.5px;font-size:9.75px;color:#b4b4ba;">请输入打样单号</span></div>
<div class="inp" style="left:141.4px;top:9.0px;width:141.400px;height:26px"><span class="t" style="left:12.0px;top:5.5px;font-size:9.75px;color:#333;">请选择样板类型</span><svg style="left:127.5px;top:10.0px;width:8px;height:5.500px" viewBox="0 0 8 5.500"><path d="M.7.800L4 4.200 7.300.800" fill="none" stroke="#3a3a3a" stroke-width="1.500"/></svg></div>
<div class="a" style="left:9.5px;top:41.1px;width:506px;height:1px;background:#e9e9f3"></div>
<div class="a" style="left:23.8px;top:51.0px;width:11px;height:11px;border:1px solid #88888e;border-radius:2px;background:#fff"></div>
<span class="t" style="left:60.8px;top:48.5px;font-size:10.5px;color:#2e2e32;">编号</span>
<span class="t" style="left:180.7px;top:48.5px;font-size:10.5px;color:#2e2e32;">样衣编号</span>
<span class="t" style="left:300.8px;top:48.5px;font-size:10.5px;color:#2e2e32;">样衣名称</span>
<span class="t" style="left:421.2px;top:48.5px;font-size:10.5px;color:#2e2e32;">版次</span>
<div class="a" style="left:15.8px;top:70.1px;width:500px;height:1px;background:#f2f2ea"></div>
<div class="a" style="left:515.8px;top:71.8px;width:1px;height:351px;background:#f1f1f8"></div>
<div class="a" style="left:23.8px;top:82.0px;width:11px;height:11px;border:1px solid #88888e;border-radius:2px;background:#fff"></div>
<span class="t" style="left:60.8px;top:79.1px;font-size:10.5px;color:#66666c;letter-spacing:.21px">DY20231207001</span>
<span class="t" style="left:181.5px;top:79.1px;font-size:10.5px;color:#66666c;letter-spacing:.18px">shidi2B1</span>
<div class="a" style="left:237.8px;top:78.6px;width:30px;height:17.200px;border:1px dashed #b4e88c;background:#f4fdea;border-radius:2px"><span class="t" style="left:6.8px;top:0.6px;font-size:10.5px;color:#5cc72a;">S+</span></div>
<span class="t" style="left:302.8px;top:79.7px;font-size:10.5px;color:#66666c;">小萝莉连衣裙-诗迪</span>
<span class="t" style="left:423.2px;top:79.7px;font-size:10.5px;color:#55555a;">头版样</span>
<div class="inp" style="left:239.9px;top:428.8px;width:40.800px;height:21.600px"><span class="t" style="left:5.5px;top:3.5px;font-size:10px;color:#66666c;">20</span><svg style="left:28.0px;top:8.0px;width:8px;height:5.500px" viewBox="0 0 8 5.500"><path d="M.7.800L4 4.200 7.300.800" fill="none" stroke="#3a3a3a" stroke-width="1.500"/></svg></div>
<span class="t" style="left:286.5px;top:432.4px;font-size:10.5px;color:#444;">第1至1条，共1条</span>
<div class="a" style="left:376.8px;top:428.8px;width:93.200px;height:21.600px;border:1px solid #e6e6ee;border-radius:2px"></div>
<span class="t" style="left:384.6px;top:432.4px;font-size:10.5px;color:#8a8a90;">上页</span>
<div class="a" style="left:412.9px;top:428.8px;width:21.600px;height:21.600px;background:#2389ee"></div>
<span class="t" style="left:420.7px;top:431.4px;font-size:10.5px;color:#fff;">1</span>
<span class="t" style="left:442.0px;top:432.4px;font-size:10.5px;color:#8a8a90;">下页</span>
<div class="inp" style="left:472.8px;top:428.8px;width:35.700px;height:21.600px"><span class="t" style="left:4.5px;top:3.2px;font-size:9.75px;color:#b4b4ba;">跳至</span></div>
</div>
<div class="a" style="left:715px;top:372.700px;width:28.800px;height:28.800px;border-radius:50%;background:#dcdce0"></div>
<svg style="left:729px;top:386px;width:10px;height:16px" viewBox="0 0 10 16"><path d="M.7.800v12.200l2.900-2.800 2 4.700 1.700-.7-2-4.600h4z" fill="#fff" stroke="#222" stroke-width="1" stroke-linejoin="round"/></svg>
<div class="a" style="left:0;top:997px;width:497px;height:17px;background:#d9dde8;border-top:1px solid #cdd1de;border-right:1px solid #cdd1de;border-top-right-radius:3px"><span class="t" style="left:3.0px;top:1.8px;font-size:10px;color:#222;">正在等待 hm.baidu.com 的响应...</span></div>

</body>
</html>
